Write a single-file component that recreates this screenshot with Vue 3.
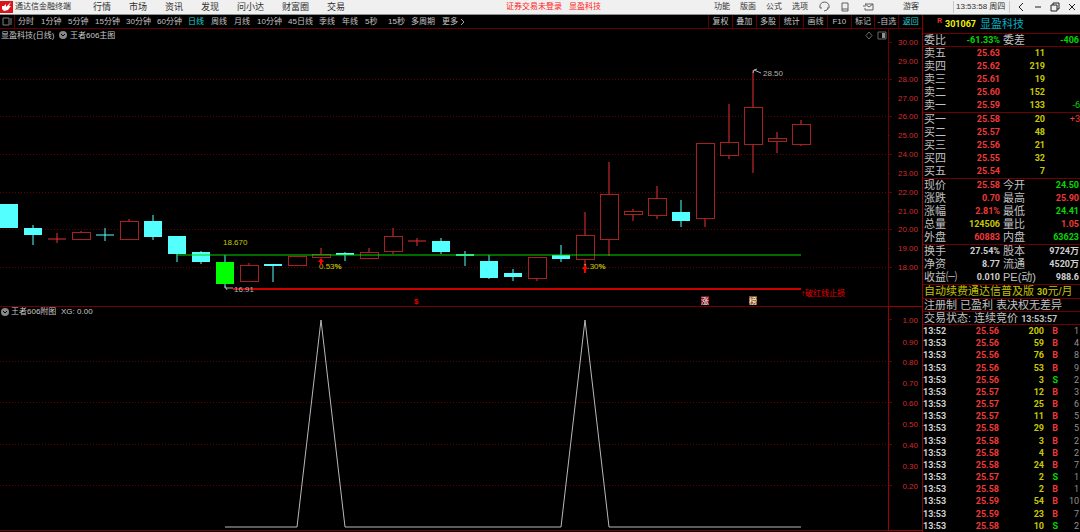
<script setup>
const nav = ['行情', '市场', '资讯', '发现', '问小达', '财富圈', '交易']
const menu = ['功能', '版面', '公式', '选项']
const periods = [
  ['分时', 's'], ['1分钟', 'm'], ['5分钟', 'm'], ['15分钟', 'l'], ['30分钟', 'l'], ['60分钟', 'l'],
  ['日线', 's'], ['周线', 's'], ['月线', 's'], ['10分钟', 'l'], ['45日线', 'l'], ['季线', 's'],
  ['年线', 's'], ['5秒', 's'], ['15秒', 's'], ['多周期', 'l'], ['更多', 's'],
]
const tools = ['复权', '叠加', '多股', '统计', '画线', 'F10', '标记', '-自选', '返回']

// body top, body bottom, high, low, kind: u = up, d = down, g = signal
const candles = [
  [204, 228, 204, 228, 'd'], [228, 235, 225, 245, 'd'], [239, 239, 233, 243, 'u'],
  [232, 239, 231, 240, 'u'], [235, 235, 228, 241, 'd'], [221, 239, 219, 239, 'u'],
  [221, 237, 215, 240, 'd'], [236, 254, 236, 262, 'd'], [252, 262, 251, 264, 'd'],
  [262, 284, 255, 288, 'g'], [265, 281, 263, 281, 'u'], [264, 266, 264, 282, 'd'],
  [256, 265, 256, 265, 'u'], [254, 257, 248, 258, 'u'], [253, 255, 252, 261, 'd'],
  [252, 258, 248, 258, 'u'], [236, 251, 228, 254, 'u'], [241, 241, 238, 246, 'u'],
  [241, 252, 238, 254, 'd'], [254, 256, 251, 266, 'd'], [261, 278, 255, 279, 'd'],
  [273, 277, 269, 281, 'd'], [257, 278, 257, 281, 'u'], [255, 259, 245, 262, 'd'],
  [235, 259, 212, 270, 'u'], [194, 239, 162, 256, 'u'], [211, 214, 209, 221, 'u'],
  [198, 215, 186, 219, 'u'], [212, 221, 200, 227, 'd'], [143, 218, 143, 227, 'u'],
  [142, 155, 104, 159, 'u'], [107, 144, 70, 173, 'u'], [138, 141, 132, 153, 'u'],
  [124, 144, 120, 146, 'u'],
].map(([top, bottom, high, low, kind], i) => ({ x: 9 + 24 * i, top, bottom, high, low, kind }))

const priceY = [42, 61, 79, 98, 116, 135, 154, 173, 192, 211, 229, 248, 267]
const priceAxis = priceY.map((y, i) => ({ y, label: (30 - i).toFixed(2), grid: i % 2 === 0 && i > 0 }))
const signalY = [319, 341, 361, 382, 402, 423, 444, 465, 485]
const signalAxis = signalY.map((y, i) => ({ y, label: (1 - i / 10).toFixed(2), grid: i % 2 === 0 && i > 0 }))

const asks = [['卖五', '25.63', '11'], ['卖四', '25.62', '219'], ['卖三', '25.61', '19'], ['卖二', '25.60', '152'], ['卖一', '25.59', '133', '-6']]
const bids = [['买一', '25.58', '20', '+3'], ['买二', '25.57', '48'], ['买三', '25.56', '21'], ['买四', '25.55', '32'], ['买五', '25.54', '7']]
const quotes = [
  ['现价', '25.58', 'red', '今开', '24.50', 'green'],
  ['涨跌', '0.70', 'red', '最高', '25.90', 'red'],
  ['涨幅', '2.81%', 'red', '最低', '24.41', 'green'],
  ['总量', '124506', 'yellow', '量比', '1.05', 'red'],
  ['外盘', '60883', 'red', '内盘', '63623', 'green'],
]
const basics = [
  ['换手', '27.54%', 'white', '股本', '9724万', 'white'],
  ['净资', '8.77', 'white', '流通', '4520万', 'white'],
  ['收益㈠', '0.010', 'white', 'PE(动)', '988.6', 'white'],
]
const ticks = [
  ['13:52', '25.56', 200, 'B', 1], ['13:53', '25.56', 59, 'B', 4], ['13:53', '25.56', 76, 'B', 8],
  ['13:53', '25.56', 53, 'B', 9], ['13:53', '25.56', 3, 'S', 2], ['13:53', '25.57', 12, 'B', 3],
  ['13:53', '25.57', 25, 'B', 6], ['13:53', '25.57', 11, 'B', 5], ['13:53', '25.58', 29, 'B', 5],
  ['13:53', '25.58', 3, 'B', 2], ['13:53', '25.58', 4, 'B', 2], ['13:53', '25.58', 24, 'B', 7],
  ['13:53', '25.57', 2, 'S', 1], ['13:53', '25.58', 2, 'B', 1], ['13:53', '25.59', 54, 'B', 10],
  ['13:53', '25.59', 23, 'B', 7], ['13:53', '25.58', 10, 'S', 2],
]
</script>

<template>
  <div class="terminal">
    <header class="titlebar">
      <div class="left">
        <svg class="logo" viewBox="0 0 13 12" aria-hidden="true">
          <rect width="13" height="12" fill="#d8141c" />
          <path d="M2 5 L4 5 L6 3 L6 6 L11 1 L9 5 L11 5 L8 9 L4 10 L2 8 Z" fill="#fff" />
        </svg>
        <span class="brand">通达信金融终端</span>
        <nav class="nav">
          <button v-for="n in nav" :key="n" type="button">{{ n }}</button>
        </nav>
      </div>
      <p class="notice"><span>证券交易未登录</span><span>显盈科技</span></p>
      <div class="right">
        <button v-for="m in menu" :key="m" type="button">{{ m }}</button>
        <button type="button" aria-label="客服">
          <svg class="ico" viewBox="0 0 12 12"><path d="M2 7 V5 A4 3.500 0 0 1 11 5 V7 H9 M2 7 H4 M10 7 L9 9 L6 10" /></svg>
        </button>
        <button type="button" aria-label="手机">
          <svg class="ico" viewBox="0 0 12 12"><path d="M2 2 H8 V10 H2 Z M2 8 H8" /></svg>
        </button>
        <button type="button" aria-label="邮件">
          <svg class="ico" viewBox="0 0 12 12"><path d="M3 3 H11 V9 H3 V7 M3 3 L7 6 L11 3 M1 5 H4" /></svg>
        </button>
        <button type="button" class="user">游客</button>
        <time class="clock">13:53:58 周四</time>
        <div class="win">
          <button type="button" aria-label="返回"><svg class="ico dark" viewBox="0 0 12 12"><path d="M8 2 L4 6 L8 10" /></svg></button>
          <button type="button" aria-label="最小化"><svg class="ico dark" viewBox="0 0 12 12"><path d="M3 6 H9" /></svg></button>
          <button type="button" aria-label="还原"><svg class="ico dark" viewBox="0 0 12 12"><path d="M2 4 H8 V10 H2 Z M4 4 V2 H10 V8 H8" /></svg></button>
          <button type="button" aria-label="关闭"><svg class="ico dark" viewBox="0 0 12 12"><path d="M3 3 L9 9 M9 3 L3 9" /></svg></button>
        </div>
      </div>
    </header>

    <div class="body">
      <main class="charts">
        <div class="toolbar">
          <button type="button" class="panel" aria-label="侧栏">
            <svg viewBox="0 0 10 9"><path d="M1 1 H7 V8 H1 Z M9 1 V8" /></svg>
          </button>
          <div class="periods">
            <button v-for="[p, size] in periods" :key="p" type="button" :class="[size, { on: p === '日线' }]">{{ p }}</button>
            <svg class="more" viewBox="0 0 4 8" aria-hidden="true"><path d="M0 1 L3 4 L0 7" /></svg>
          </div>
          <div class="tools">
            <button v-for="t in tools" :key="t" type="button" :class="{ on: t === '返回' }">{{ t }}</button>
          </div>
        </div>

        <svg class="chart" viewBox="0 29 922 278" role="img" aria-label="王者606主图">
          <g class="crisp">
            <g v-for="a in priceAxis" :key="a.y">
              <line v-if="a.grid" class="grid" x1="0" x2="888" :y1="a.y" :y2="a.y" />
              <line class="tick" x1="888" :x2="a.grid || a.y === 42 ? 892 : 890" :y1="a.y" :y2="a.y" />
            </g>
            <line class="frame" x1="888" x2="888" y1="29" y2="307" />
            <line class="frame" x1="0" x2="888" y1="306" y2="306" />
            <line class="box" x1="888" x2="922" y1="306" y2="306" />
          </g>
          <g v-for="c in candles" :key="c.x" :class="c.kind">
            <line v-if="c.high < c.top" :x1="c.x" :x2="c.x" :y1="c.high" :y2="c.top" />
            <line v-if="c.low > c.bottom" :x1="c.x" :x2="c.x" :y1="c.bottom" :y2="c.low" />
            <line v-if="c.top === c.bottom" :x1="c.x - 9" :x2="c.x + 9" :y1="c.top" :y2="c.top" />
            <rect v-else class="solid" :x="c.x - 9" :y="c.top" width="18" :height="c.bottom - c.top" />
          </g>
          <line class="cost" x1="177" x2="801" y1="255" y2="255" />
          <line class="stop" x1="233" x2="801" y1="289" y2="289" />
          <g class="axis">
            <text v-for="a in priceAxis" :key="a.y" x="918" :y="a.y + 3">{{ a.label }}</text>
          </g>
          <g class="pointer">
            <path d="M225 288 H233 M225 286 L227 290" />
            <path d="M753 73 L754 70 L761 73 M754 70 L757 69" />
          </g>
          <g class="note">
            <text x="1" y="38">显盈科技(日线)</text>
            <text x="70" y="38">王者606主图</text>
            <text class="dim" x="234" y="292">16.91</text>
            <text class="dim" x="763" y="76">28.50</text>
          </g>
          <circle class="knob" cx="63" cy="35" r="4" />
          <path class="chev" d="M61 34 L63 36 L65 34" />
          <path class="glyph" d="M869 32 L872 35.500 L869 39 L866 35.500 Z M878 32 H886 V39 H878 Z" />
          <rect x="882" y="33" width="3" height="5" fill="#909090" />
          <g class="mark">
            <text x="223" y="245">18.670</text>
            <text x="319" y="269">0.53<tspan class="strong">%</tspan></text>
            <text x="583" y="269">1.30<tspan class="strong">%</tspan></text>
          </g>
          <path class="arrow" d="M321 258 L324 262 H322 V265 H320 V262 H318 Z" />
          <path class="arrow" d="M585 265 L588 269 H586 V273 H584 V269 H582 Z" />
          <g class="alert">
            <text class="strong" x="414" y="304">$</text>
            <text x="801" y="296">↑破红线止损</text>
          </g>
          <rect x="701" y="296" width="8" height="9" fill="#800c14" />
          <text class="tag" x="701" y="304">涨</text>
          <rect x="749" y="296" width="8" height="9" fill="#8a4a10" />
          <text class="tag" x="749" y="304">榜</text>
        </svg>

        <svg class="chart" viewBox="0 307 922 225" role="img" aria-label="王者606附图">
          <g class="crisp">
            <g v-for="a in signalAxis" :key="a.y">
              <line v-if="a.grid" class="grid" x1="0" x2="888" :y1="a.y" :y2="a.y" />
              <line class="tick" x1="888" :x2="a.grid || a.y === 319 ? 892 : 890" :y1="a.y" :y2="a.y" />
            </g>
            <line class="box" x1="888" x2="888" y1="307" y2="530" />
            <line class="box" x1="888" x2="922" y1="530" y2="530" />
            <line class="frame" x1="0" x2="888" y1="530" y2="530" />
          </g>
          <g class="axis">
            <text v-for="a in signalAxis" :key="a.y" x="918" :y="a.y + 4">{{ a.label }}</text>
          </g>
          <circle class="knob" cx="5" cy="312" r="4" />
          <path class="chev" d="M3 311 L5 313 L7 311" />
          <g class="note">
            <text x="11" y="314">王者606附图</text>
            <text x="61" y="314">XG: 0.00</text>
          </g>
          <path class="signal" d="M225 527 H297 L321 320 L345 527 H561 L585 320 L609 527 H801" />
        </svg>
      </main>

      <aside class="quote">
        <h1><sup>R</sup><b>301067</b><span>显盈科技</span></h1>
        <table class="pairs first">
          <tbody>
            <tr><th>委比</th><td class="green">-61.33%</td><th>委差</th><td class="green">-406</td></tr>
          </tbody>
        </table>
        <table v-for="(book, i) in [asks, bids]" :key="i" class="book">
          <tbody>
            <tr v-for="r in book" :key="r[0]">
              <th>{{ r[0] }}</th><td class="red">{{ r[1] }}</td><td class="yellow">{{ r[2] }}</td>
              <td class="delta" :class="i ? 'red' : 'green'">{{ r[3] }}</td>
            </tr>
          </tbody>
        </table>
        <table v-for="(rows, i) in [quotes, basics]" :key="'q' + i" class="pairs">
          <tbody>
            <tr v-for="r in rows" :key="r[0]">
              <th>{{ r[0] }}</th><td :class="r[2]">{{ r[1] }}</td><th>{{ r[3] }}</th><td :class="r[5]">{{ r[4] }}</td>
            </tr>
          </tbody>
        </table>
        <a class="line promo" href="#">自动续费通达信普及版 <b>30</b>元/月</a>
        <p class="line">注册制 已盈利 表决权无差异</p>
        <p class="line">交易状态: 连续竞价 <b>13:53:57</b></p>
        <table class="ticks">
          <tbody>
            <tr v-for="(t, i) in ticks" :key="i">
              <td class="white">{{ t[0] }}</td><td class="red">{{ t[1] }}</td><td class="yellow">{{ t[2] }}</td>
              <td class="side" :class="t[3] === 'B' ? 'red' : 'green'">{{ t[3] }}</td><td class="count">{{ t[4] }}</td>
            </tr>
          </tbody>
        </table>
      </aside>
    </div>
  </div>
</template>

<style>
body { background: #000; }
</style>

<style scoped>
.terminal {
  min-height: 100vh;
  display: flex;
  flex-direction: column;
  overflow: hidden;
  background: #000;
  color: #c0c0c0;
  font: 8px/12px "Liberation Sans", "Noto Sans CJK SC", sans-serif;
  white-space: nowrap;
}
button {
  display: block;
  margin: 0;
  padding: 0;
  border: 0;
  background: none;
  color: inherit;
  font: inherit;
  text-align: left;
  white-space: nowrap;
}
svg { display: block; }
p, h1 { margin: 0; font-weight: normal; }

.titlebar {
  display: flex;
  height: 14px;
  border-bottom: 1px solid #8c9494;
  background: #f0f0f0;
  color: #303030;
}
.left { flex: 1; display: flex; align-items: center; }
.logo { width: 13px; height: 12px; margin-right: 2px; }
.nav { display: flex; gap: 18px; margin-left: 22px; font-size: 9px; }
.notice { display: flex; align-items: center; gap: 7px; color: #ff2020; }
.right { display: flex; align-items: center; gap: 10px; padding-left: 113px; }
.ico { width: 12px; height: 12px; fill: none; stroke: #606060; }
.ico.dark { stroke: #202020; }
.user { margin-left: 19px; }
.clock {
  width: 53px;
  margin-left: 24px;
  padding-left: 2px;
  border: solid #c8c8c8;
  border-width: 0 1px;
}
.win { display: flex; margin-left: -8px; }
.win button { display: flex; justify-content: center; width: 17px; }

.body { flex: 1; display: flex; }
.charts { flex: 1; min-width: 0; }
.toolbar {
  display: flex;
  height: 13px;
  border-bottom: 1px solid #600000;
  line-height: 13px;
}
.panel { width: 15px; padding-left: 2px; border-right: 1px solid #600000; }
.panel svg { width: 10px; height: 9px; fill: none; stroke: #808080; }
.periods { flex: 1; display: flex; align-items: center; gap: 7px; padding-left: 3px; }
.s { width: 16px; }
.m { width: 20px; }
.l { width: 24px; }
.more { width: 4px; height: 8px; margin-left: -4px; fill: none; stroke: #a0a0a0; }
.tools { display: flex; width: 214px; }
.tools button { flex: 1; border-left: 1px solid #600000; text-align: center; }
.toolbar .on { color: #20d0d0; }

.chart { width: 100%; height: auto; font-size: 8px; }
.crisp, .solid { shape-rendering: crispEdges; }
.grid { stroke: #600000; stroke-dasharray: 1 2; }
.tick, .frame { stroke: #700000; }
.box { stroke: #a00000; }
.u line { stroke: #e83030; }
.u rect { stroke: #a82020; fill: #000; }
.d line, .g line { stroke: #54ffff; }
.d rect { fill: #54ffff; }
.g rect { fill: #00ff00; }
.cost { stroke: #00d800; }
.stop { stroke: #ff0000; stroke-width: 2; stroke-opacity: 0.8; }
.axis { fill: #d02c2c; text-anchor: end; }
.note { fill: #c8c8c8; }
.dim { fill: #b0b0b0; }
.knob { fill: #888; }
.chev { fill: none; stroke: #000; }
.glyph { fill: none; stroke: #686868; }
.pointer { fill: none; stroke: #b0b0b0; }
.mark { fill: #c8c800; }
.strong { font-weight: bold; }
.arrow { fill: #ff0000; }
.alert { fill: #e80000; }
.tag { fill: #fff; }
.signal { fill: none; stroke: #b8b8b8; }

.quote {
  box-sizing: border-box;
  width: 158px;
  display: flex;
  flex-direction: column;
  border-left: 1px solid #900000;
  font-size: 11px;
  line-height: 13px;
}
h1 {
  display: flex;
  align-items: center;
  height: 18px;
  padding-left: 14px;
  border-bottom: 1px solid #700000;
  font-size: 11px;
}
h1 sup { width: 8px; color: #e03030; font: bold 8px/8px Roboto, sans-serif; align-self: flex-start; margin-top: 2px; }
h1 b { color: #f0f000; margin-right: 4px; }
h1 span { color: #00b0c0; }
b, td { font-family: Roboto, "Noto Sans CJK SC", sans-serif; font-size: 9px; font-weight: bold; }
table { display: block; border-bottom: 1px solid #700000; }
tbody { display: block; }
tr { display: grid; height: 13px; align-items: center; }
th, td { display: block; padding: 0; line-height: 13px; text-align: right; }
th { font-weight: normal; text-align: left; }
.first tr { height: 12px; }
.pairs tr { grid-template-columns: 26px 50px 25px 1fr; padding-left: 1px; }
.pairs th:nth-child(3) { padding-left: 3px; }
.pairs td:last-child { padding-right: 1px; }
.book tr { grid-template-columns: 26px 50px 45px 1fr; padding-left: 1px; }
.delta { font-weight: normal; }
.line { display: block; height: 12px; padding-left: 1px; border-bottom: 1px solid #700000; line-height: 12px; }
.promo { height: 13px; line-height: 13px; color: #c0c000; text-decoration: none; }
.ticks { flex: 1; display: flex; border: 0; }
.ticks tbody { flex: 1; display: flex; flex-direction: column; }
.ticks tr { flex: 1; height: auto; grid-template-columns: 26px 50px 45px 14px 1fr; }
.ticks td { line-height: 12px; }
.ticks td:first-child { text-align: left; }
.ticks td:last-child { padding-right: 1px; }
.count { color: #909090; font-weight: normal; }
.red { color: #f03838; }
.green { color: #00d800; }
.yellow { color: #c8c800; }
.white { color: #d0d0d0; }
</style>
